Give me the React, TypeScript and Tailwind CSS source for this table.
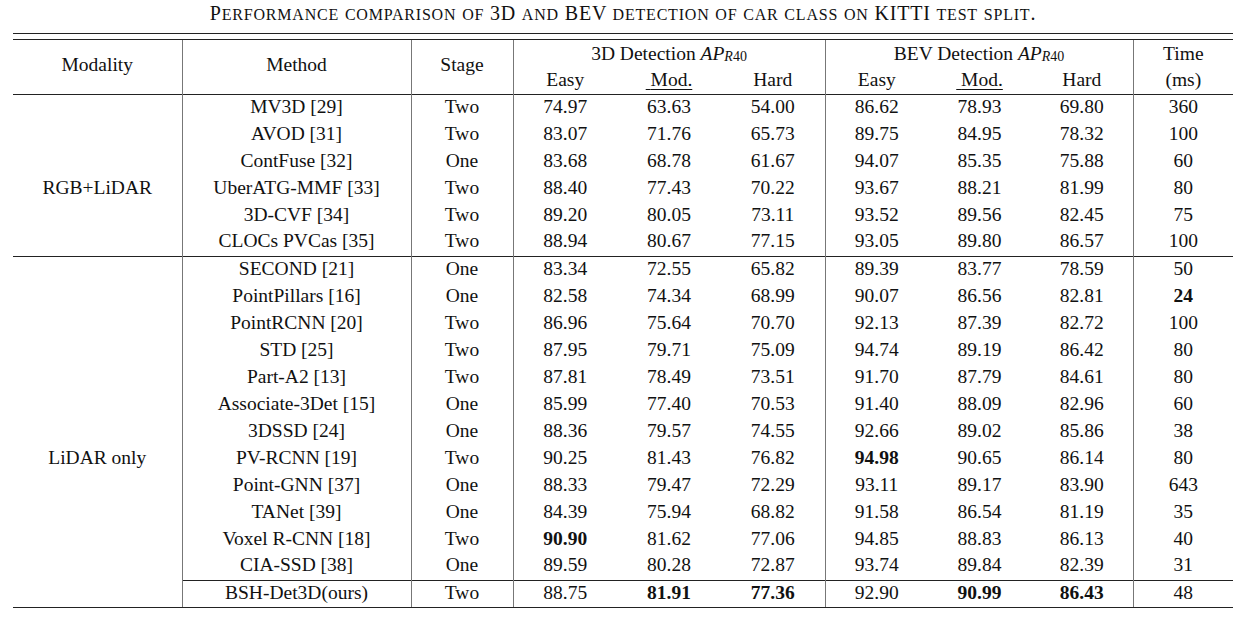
import React from "react";

type Row = string[];

const rgbRows: Row[] = [
    ["MV3D [29]", "Two", "74.97", "63.63", "54.00", "86.62", "78.93", "69.80", "360"],
    ["AVOD [31]", "Two", "83.07", "71.76", "65.73", "89.75", "84.95", "78.32", "100"],
    ["ContFuse [32]", "One", "83.68", "68.78", "61.67", "94.07", "85.35", "75.88", "60"],
    ["UberATG-MMF [33]", "Two", "88.40", "77.43", "70.22", "93.67", "88.21", "81.99", "80"],
    ["3D-CVF [34]", "Two", "89.20", "80.05", "73.11", "93.52", "89.56", "82.45", "75"],
    ["CLOCs PVCas [35]", "Two", "88.94", "80.67", "77.15", "93.05", "89.80", "86.57", "100"],
];

// "*" marks a bold value
const lidarRows: Row[] = [
    ["SECOND [21]", "One", "83.34", "72.55", "65.82", "89.39", "83.77", "78.59", "50"],
    ["PointPillars [16]", "One", "82.58", "74.34", "68.99", "90.07", "86.56", "82.81", "*24"],
    ["PointRCNN [20]", "Two", "86.96", "75.64", "70.70", "92.13", "87.39", "82.72", "100"],
    ["STD [25]", "Two", "87.95", "79.71", "75.09", "94.74", "89.19", "86.42", "80"],
    ["Part-A2 [13]", "Two", "87.81", "78.49", "73.51", "91.70", "87.79", "84.61", "80"],
    ["Associate-3Det [15]", "One", "85.99", "77.40", "70.53", "91.40", "88.09", "82.96", "60"],
    ["3DSSD [24]", "One", "88.36", "79.57", "74.55", "92.66", "89.02", "85.86", "38"],
    ["PV-RCNN [19]", "Two", "90.25", "81.43", "76.82", "*94.98", "90.65", "86.14", "80"],
    ["Point-GNN [37]", "One", "88.33", "79.47", "72.29", "93.11", "89.17", "83.90", "643"],
    ["TANet [39]", "One", "84.39", "75.94", "68.82", "91.58", "86.54", "81.19", "35"],
    ["Voxel R-CNN [18]", "Two", "*90.90", "81.62", "77.06", "94.85", "88.83", "86.13", "40"],
    ["CIA-SSD [38]", "One", "89.59", "80.28", "72.87", "93.74", "89.84", "82.39", "31"],
];

const oursRow: Row = ["BSH-Det3D(ours)", "Two", "88.75", "*81.91", "*77.36", "92.90", "*90.99", "*86.43", "48"];

const title = "Performance comparison of 3D and BEV detection of car class on KITTI test split.";

const vline = "border-l border-l-[#777]";
// columns that carry a vertical rule on their left side
const leftRule = [false, true, true, true, false, false, true, false, false, true];

// LaTeX-style small caps: lowercase letters become smaller capitals
const SmallCaps = ({ text }: { text: string }) => {
    const runs = text.match(/[a-z]+|[^a-z]+/g) ?? [];
    return (
        <>
            {runs.map((r, i) =>
                /[a-z]/.test(r) ? (
                    <span key={i} className="text-[16px]">
                        {r.toUpperCase()}
                    </span>
                ) : (
                    <span key={i}>{r}</span>
                )
            )}
        </>
    );
};

const Val = ({ v }: { v: string }) =>
    v.startsWith("*") ? <span className="font-bold">{v.slice(1)}</span> : <>{v}</>;

const AP = () => (
    <span className="italic">
        AP
        <sub className="text-[14px] not-italic relative top-[1px]">
            <span className="italic">R</span>40
        </sub>
    </span>
);

const DataRow = ({
    row,
    label,
    topRule,
    bottomRule,
}: {
    row: Row;
    label?: string;
    topRule?: "full" | "partial";
    bottomRule?: boolean;
}) => {
    const cells = [label ?? "", ...row];
    return (
        <tr className="h-[27px]">
            {cells.map((c, i) => {
                let cls = "p-0 pb-[2px] text-center align-middle whitespace-nowrap";
                if (leftRule[i]) cls += " " + vline;
                if (topRule === "full" || (topRule === "partial" && i > 0)) cls += " border-t border-t-[#222]";
                if (bottomRule) cls += " border-b border-b-[#222]";
                return (
                    <td key={i} className={cls}>
                        <Val v={c} />
                    </td>
                );
            })}
        </tr>
    );
};

export default function App() {
    return (
        <div className="w-[1254px] h-[618px] bg-white pl-[13px] font-['Liberation_Serif','Times_New_Roman',serif] text-[19.5px] text-[#111]">
            <div className="w-[1220px]">
                <div className="h-[33px] leading-[26px] text-center text-[20px] tracking-[0.8px]">
                    <SmallCaps text={title} />
                </div>
                <div className="h-[7px] border-y border-[#222]" />
                <table className="w-[1220px] table-fixed border-collapse leading-[22px]">
                    <colgroup>
                        <col className="w-[169px]" />
                        <col className="w-[229px]" />
                        <col className="w-[102px]" />
                        <col className="w-[104px]" />
                        <col className="w-[104px]" />
                        <col className="w-[104px]" />
                        <col className="w-[103px]" />
                        <col className="w-[103px]" />
                        <col className="w-[102px]" />
                        <col className="w-[100px]" />
                    </colgroup>
                    <thead>
                        <tr className="h-[27px]">
                            <th rowSpan={2} className="p-0 pb-[3px] font-normal text-center align-middle">
                                Modality
                            </th>
                            <th rowSpan={2} className={`p-0 pb-[3px] font-normal text-center align-middle ${vline}`}>
                                Method
                            </th>
                            <th rowSpan={2} className={`p-0 pb-[3px] font-normal text-center align-middle ${vline}`}>
                                Stage
                            </th>
                            <th colSpan={3} className={`p-0 font-normal text-center align-middle ${vline}`}>
                                3D Detection <AP />
                            </th>
                            <th colSpan={3} className={`p-0 font-normal text-center align-middle ${vline}`}>
                                BEV Detection <AP />
                            </th>
                            <th className={`p-0 font-normal text-center align-middle ${vline}`}>Time</th>
                        </tr>
                        <tr className="h-[27px]">
                            <th className={`p-0 font-normal text-center align-middle ${vline}`}>Easy</th>
                            <th className="p-0 font-normal text-center align-middle">
                                <span className="underline decoration-1 underline-offset-[3px]">{"\u00a0"}Mod.</span>
                            </th>
                            <th className="p-0 font-normal text-center align-middle">Hard</th>
                            <th className={`p-0 font-normal text-center align-middle ${vline}`}>Easy</th>
                            <th className="p-0 font-normal text-center align-middle">
                                <span className="underline decoration-1 underline-offset-[3px]">{"\u00a0"}Mod.</span>
                            </th>
                            <th className="p-0 font-normal text-center align-middle">Hard</th>
                            <th className={`p-0 font-normal text-center align-middle ${vline}`}>(ms)</th>
                        </tr>
                    </thead>
                    <tbody>
                        {rgbRows.map((r, i) => (
                            <DataRow key={r[0]} row={r} label={i === 3 ? "RGB+LiDAR" : ""} topRule={i === 0 ? "full" : undefined} />
                        ))}
                        {lidarRows.map((r, i) => (
                            <DataRow key={r[0]} row={r} label={i === 7 ? "LiDAR only" : ""} topRule={i === 0 ? "full" : undefined} />
                        ))}
                        <DataRow row={oursRow} label="" topRule="partial" bottomRule />
                    </tbody>
                </table>
            </div>
        </div>
    );
}
